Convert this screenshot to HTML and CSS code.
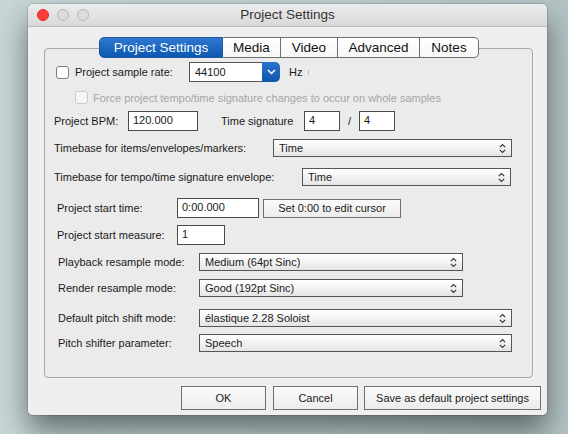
FILE: index.html
```html
<!DOCTYPE html>
<html>
<head>
<meta charset="utf-8">
<link rel="stylesheet" href="styles.css">
</head>
<body>
<div class="desktop">
  <div class="window">
    <div class="titlebar">
      <div class="lights">
        <span class="light red"></span>
        <span class="light gray"></span>
        <span class="light gray"></span>
      </div>
      <div class="title">Project Settings</div>
    </div>
    <div class="body">
      <div class="group">
        <div class="tabs">
          <div class="tab active t-ps">Project Settings</div>
          <div class="tab t-media">Media</div>
          <div class="tab t-video">Video</div>
          <div class="tab t-adv">Advanced</div>
          <div class="tab t-notes">Notes</div>
        </div>

        <div class="row r-rate">
          <span class="check"></span>
          <span class="lbl w-rate">Project sample rate:</span>
          <div class="combo">
            <span class="combo-text">44100</span>
            <span class="combo-btn"><svg width="9" height="6" viewBox="0 0 9 6"><polyline points="1,1 4.5,4.5 8,1" fill="none" stroke="#fff" stroke-width="1.5"/></svg></span>
          </div>
          <span class="hz">Hz</span>
          <span class="mark"></span>
        </div>

        <div class="row r-force">
          <span class="check disabled"></span>
          <span class="lbl dim">Force project tempo/time signature changes to occur on whole samples</span>
        </div>

        <div class="row r-bpm">
          <span class="lbl w-bpm">Project BPM:</span>
          <span class="input w-in-bpm">120.000</span>
          <span class="lbl w-ts">Time signature</span>
          <span class="input w-in-ts">4</span>
          <span class="slash">/</span>
          <span class="input w-in-ts">4</span>
        </div>

        <div class="row r-tb1">
          <span class="lbl w-tb1">Timebase for items/envelopes/markers:</span>
          <div class="select w-sel-tb1"><span>Time</span><svg class="arr" width="7" height="11" viewBox="0 0 7 11"><polyline points="0.8,4.2 3.5,1.5 6.2,4.2" fill="none" stroke="#333" stroke-width="1.1"/><polyline points="0.8,6.8 3.5,9.5 6.2,6.8" fill="none" stroke="#333" stroke-width="1.1"/></svg></div>
        </div>

        <div class="row r-tb2">
          <span class="lbl w-tb2">Timebase for tempo/time signature envelope:</span>
          <div class="select w-sel-tb2"><span>Time</span><svg class="arr" width="7" height="11" viewBox="0 0 7 11"><polyline points="0.8,4.2 3.5,1.5 6.2,4.2" fill="none" stroke="#333" stroke-width="1.1"/><polyline points="0.8,6.8 3.5,9.5 6.2,6.8" fill="none" stroke="#333" stroke-width="1.1"/></svg></div>
        </div>

        <div class="row r-start">
          <span class="lbl w-start">Project start time:</span>
          <span class="input w-in-start">0:00.000</span>
          <span class="btn w-btn-set">Set 0:00 to edit cursor</span>
        </div>

        <div class="row r-measure">
          <span class="lbl w-start">Project start measure:</span>
          <span class="input w-in-measure">1</span>
        </div>

        <div class="row r-play">
          <span class="lbl w-mode">Playback resample mode:</span>
          <div class="select w-sel-mode"><span>Medium (64pt Sinc)</span><svg class="arr" width="7" height="11" viewBox="0 0 7 11"><polyline points="0.8,4.2 3.5,1.5 6.2,4.2" fill="none" stroke="#333" stroke-width="1.1"/><polyline points="0.8,6.8 3.5,9.5 6.2,6.8" fill="none" stroke="#333" stroke-width="1.1"/></svg></div>
        </div>

        <div class="row r-render">
          <span class="lbl w-mode">Render resample mode:</span>
          <div class="select w-sel-mode"><span>Good (192pt Sinc)</span><svg class="arr" width="7" height="11" viewBox="0 0 7 11"><polyline points="0.8,4.2 3.5,1.5 6.2,4.2" fill="none" stroke="#333" stroke-width="1.1"/><polyline points="0.8,6.8 3.5,9.5 6.2,6.8" fill="none" stroke="#333" stroke-width="1.1"/></svg></div>
        </div>

        <div class="row r-pitch">
          <span class="lbl w-mode">Default pitch shift mode:</span>
          <div class="select w-sel-pitch"><span>élastique 2.28 Soloist</span><svg class="arr" width="7" height="11" viewBox="0 0 7 11"><polyline points="0.8,4.2 3.5,1.5 6.2,4.2" fill="none" stroke="#333" stroke-width="1.1"/><polyline points="0.8,6.8 3.5,9.5 6.2,6.8" fill="none" stroke="#333" stroke-width="1.1"/></svg></div>
        </div>

        <div class="row r-param">
          <span class="lbl w-mode">Pitch shifter parameter:</span>
          <div class="select w-sel-pitch"><span>Speech</span><svg class="arr" width="7" height="11" viewBox="0 0 7 11"><polyline points="0.8,4.2 3.5,1.5 6.2,4.2" fill="none" stroke="#333" stroke-width="1.1"/><polyline points="0.8,6.8 3.5,9.5 6.2,6.8" fill="none" stroke="#333" stroke-width="1.1"/></svg></div>
        </div>
      </div>

      <div class="buttons">
        <span class="btn big w-ok">OK</span>
        <span class="btn big w-ok">Cancel</span>
        <span class="btn big w-save">Save as default project settings</span>
      </div>
    </div>
  </div>
</div>
</body>
</html>
```

FILE: styles.css
```css
html, body {
  margin: 0;
  padding: 0;
}
body {
  width: 568px;
  height: 434px;
  overflow: hidden;
  background: linear-gradient(to right, #c8d7d7 0%, #c2d1d1 60%, #b4c3c3 100%);
  font-family: "Liberation Sans", Arial, sans-serif;
  font-size: 11px;
  color: #1a1a1a;
}
.desktop {
  padding: 4px 0 0 28px;
}
.window {
  width: 519px;
  height: 411px;
  background: #ececec;
  border-radius: 5px;
  box-shadow: 0 0 0 1px rgba(0,0,0,0.12), 0 16px 30px rgba(30,40,40,0.6);
  display: flex;
  flex-direction: column;
  overflow: hidden;
}
.titlebar {
  height: 22px;
  flex: none;
  display: flex;
  align-items: center;
  background: linear-gradient(#ececec, #d9d9d9);
  border-bottom: 1px solid #bdbdbd;
  position: relative;
}
.lights {
  display: flex;
  gap: 8px;
  padding-left: 9px;
}
.light {
  width: 12px;
  height: 12px;
  border-radius: 50%;
  box-sizing: border-box;
}
.light.red {
  background: #fc3d3a;
  border: 1px solid #de2d2a;
}
.light.gray {
  background: #dcdcdc;
  border: 1px solid #b4b4b4;
}
.title {
  position: absolute;
  left: 0;
  right: 0;
  top: 0;
  line-height: 22px;
  text-align: center;
  font-size: 13.5px;
  color: #333;
  pointer-events: none;
}
.body {
  flex: 1;
  display: flex;
  flex-direction: column;
  padding: 21px 0 0 16px;
  background: #efefef;
}
.group {
  width: 487px;
  height: 328px;
  border: 1px solid #a8a8a8;
  border-radius: 4px;
  background: #ebebeb;
  box-sizing: content-box;
}
.tabs {
  display: flex;
  justify-content: center;
  margin-top: -12px;
  margin-left: 1px;
}
.tab {
  height: 19px;
  line-height: 19px;
  font-size: 13.5px;
  text-align: center;
  background: linear-gradient(#ffffff, #f7f7f7);
  border: 1px solid #6e6e6e;
  border-left: none;
  color: #111;
}
.tab.t-ps { width: 122px; border-left: 1px solid #1d57a0; border-radius: 5px 0 0 5px; }
.tab.t-media { width: 57px; }
.tab.t-video { width: 56px; }
.tab.t-adv { width: 81px; }
.tab.t-notes { width: 58px; border-radius: 0 5px 5px 0; }
.tab.active {
  background: linear-gradient(#2e78d2, #0d58b0);
  color: #fff;
  border-color: #1d57a0;
}

.row {
  display: flex;
  align-items: center;
}
.lbl {
  white-space: nowrap;
  flex: none;
}
.dim { color: #a6a6a6; }

.r-rate { margin-top: 4px; height: 20px; padding-left: 11px; }
.r-force { margin-top: 9px; height: 13px; padding-left: 30px; }
.r-bpm { margin-top: 7px; height: 20px; padding-left: 9px; }
.r-tb1 { margin-top: 8px; height: 18px; padding-left: 9px; }
.r-tb2 { margin-top: 11px; height: 18px; padding-left: 9px; }
.r-start { margin-top: 12px; height: 20px; padding-left: 12px; }
.r-measure { margin-top: 7px; height: 20px; padding-left: 12px; }
.r-play { margin-top: 8px; height: 18px; padding-left: 13px; }
.r-render { margin-top: 8px; height: 18px; padding-left: 13px; }
.r-pitch { margin-top: 12px; height: 18px; padding-left: 13px; }
.r-param { margin-top: 7px; height: 18px; padding-left: 13px; }

.check {
  width: 13px;
  height: 13px;
  box-sizing: border-box;
  border: 1px solid #7d7d7d;
  border-radius: 3px;
  background: #fff;
  flex: none;
}
.r-rate .check { margin-right: 6px; }
.check.disabled {
  border-color: #c9c9c9;
  background: #f6f6f6;
  margin-right: 5px;
}

.w-rate { width: 114px; }
.combo {
  display: flex;
  width: 91px;
  height: 20px;
  flex: none;
}
.combo-text {
  width: 73px;
  box-sizing: border-box;
  border: 1px solid #555;
  border-right: none;
  background: #fff;
  padding-left: 5px;
  line-height: 18px;
}
.combo-btn {
  width: 18px;
  background: linear-gradient(#2a72cc, #0f56ad);
  border-radius: 0 5px 5px 0;
  display: flex;
  align-items: center;
  justify-content: center;
}
.hz { margin-left: 9px; }
.mark {
  width: 1px;
  height: 5px;
  background: #f0b070;
  margin-left: 6px;
}

.input {
  height: 20px;
  box-sizing: border-box;
  border: 1px solid #4a4a4a;
  background: #fff;
  padding-left: 4px;
  line-height: 17px;
  flex: none;
}
.w-bpm { width: 74px; }
.w-in-bpm { width: 70px; }
.w-ts { width: 83px; margin-left: 23px; }
.w-in-ts { width: 36px; }
.slash {
  width: 19px;
  text-align: center;
  flex: none;
}

.select {
  height: 18px;
  box-sizing: border-box;
  border: 1px solid #555;
  background: linear-gradient(#ffffff 0%, #f3f3f3 50%, #e4e4e4 100%);
  display: flex;
  align-items: center;
  justify-content: space-between;
  padding: 0 5px 0 5px;
  flex: none;
}
.select .arr { flex: none; }
.w-tb1 { width: 219px; }
.w-sel-tb1 { width: 239px; }
.w-tb2 { width: 248px; }
.w-sel-tb2 { width: 209px; }
.w-start { width: 120px; }
.w-in-start { width: 82px; }
.w-in-measure { width: 48px; }
.w-mode { width: 141px; }
.w-sel-mode { width: 264px; }
.w-sel-pitch { width: 313px; }

.btn {
  box-sizing: border-box;
  border: 1px solid #6f6f6f;
  background: linear-gradient(#fbfbfb, #ececec);
  text-align: center;
  flex: none;
}
.w-btn-set {
  width: 138px;
  height: 19px;
  line-height: 17px;
  margin-left: 4px;
}
.buttons {
  display: flex;
  justify-content: flex-end;
  gap: 7px;
  margin-top: 8px;
  padding-right: 6px;
}
.btn.big {
  height: 24px;
  line-height: 22px;
}
.w-ok { width: 85px; }
.w-save { width: 177px; margin-left: -1px; }
```
